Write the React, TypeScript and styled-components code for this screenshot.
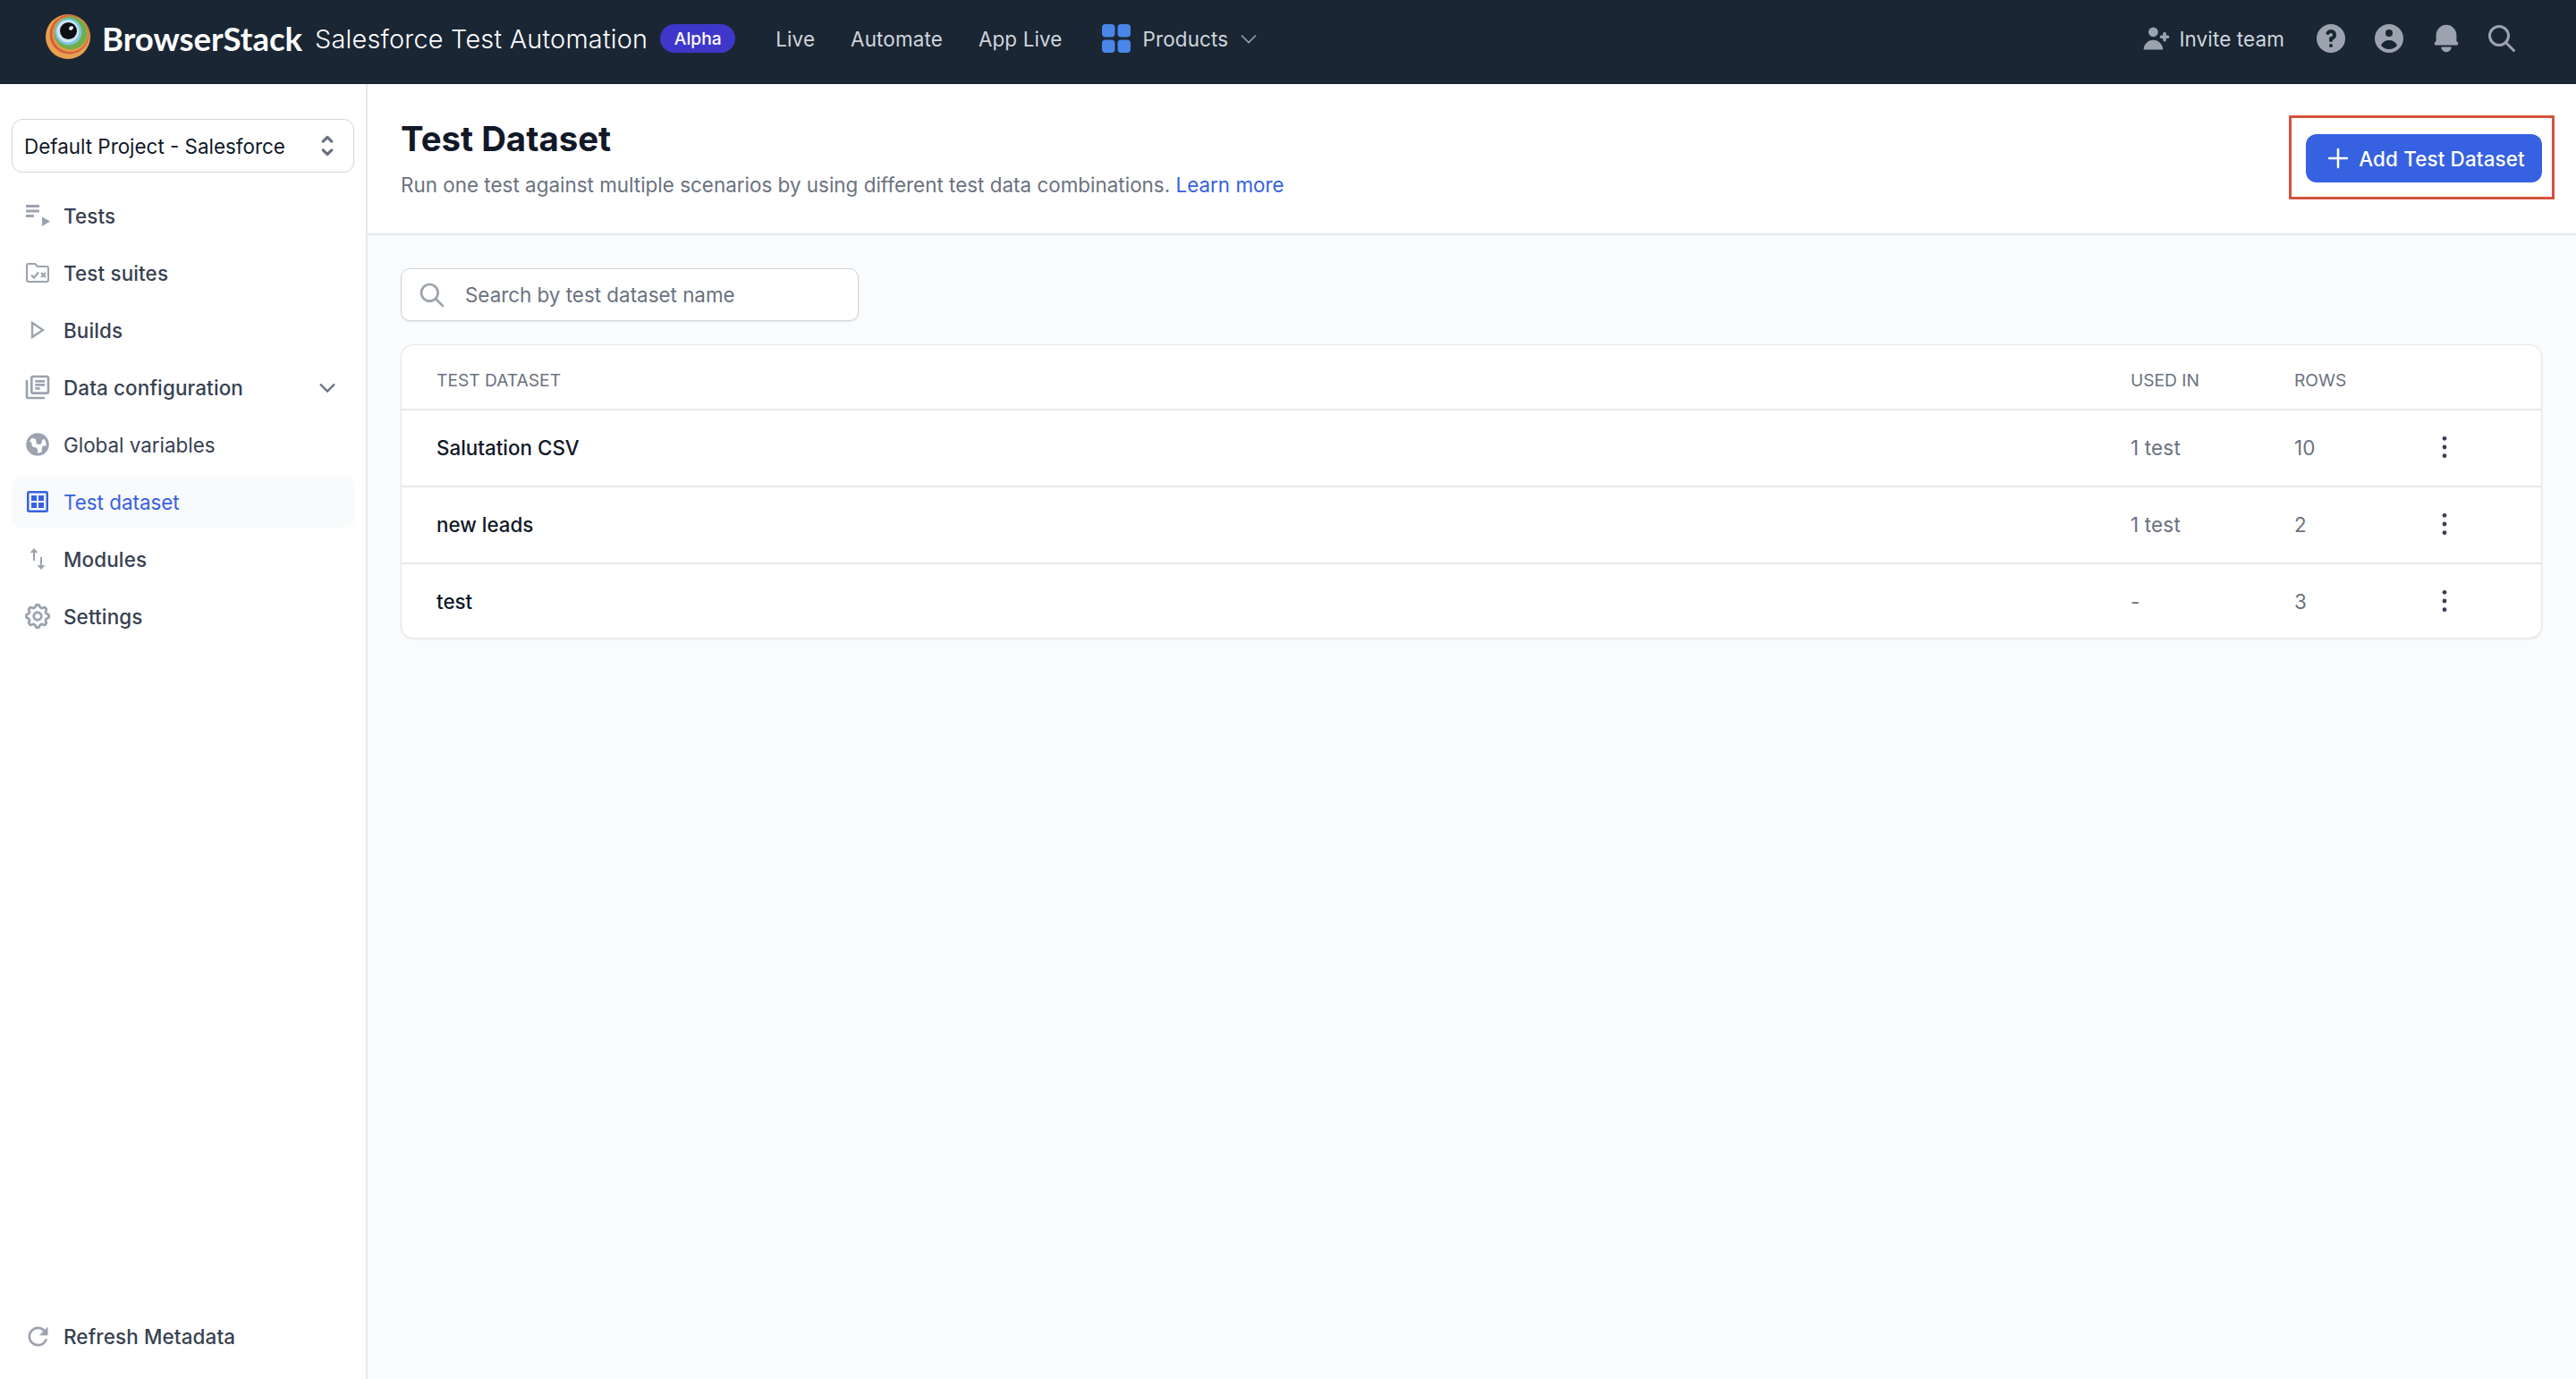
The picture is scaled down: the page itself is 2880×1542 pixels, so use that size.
import React from 'react';
import styled, { createGlobalStyle } from 'styled-components';
import { HiBell, HiGlobe, HiOutlineCog, HiOutlineSearch, HiQuestionMarkCircle, HiSelector, HiUserAdd, HiUserCircle } from 'react-icons/hi';
import { MdOutlineLibraryBooks, MdRefresh } from 'react-icons/md';
import { Plus } from 'lucide-react';

const GlobalStyle = createGlobalStyle`
  html, body { margin: 0; padding: 0; height: 100%; }
  body { font-family: Inter, "Liberation Sans", sans-serif; background: #f9fbfc; color: #111827; }
  #root { height: 100%; }
  * { box-sizing: border-box; }
`;

const Page = styled.div`
  display: flex;
  flex-direction: column;
  height: 100vh;
  overflow: hidden;
`;

// Top bar
const TopBar = styled.header`
  flex: 0 0 94px;
  height: 94px;
  background: #1a2634;
  display: flex;
  align-items: center;
  padding: 0 65px 8px 51px;
  color: #d1d5db;
`;

const BrandName = styled.span`
  margin-left: 13px;
  font-family: Lato, sans-serif;
  font-size: 36.5px;
  font-weight: 700;
  color: #fff;
`;

const ProductName = styled.span`
  margin-left: 14px;
  font-size: 28.8px;
  font-weight: 300;
  color: #fff;
  letter-spacing: 0.25px;
`;

const AlphaBadge = styled.span`
  margin-left: 14px;
  width: 84px;
  height: 32px;
  border-radius: 16px;
  background: #3f37c9;
  color: #fff;
  font-size: 19.2px;
  font-weight: 500;
  display: flex;
  align-items: center;
  justify-content: center;
`;

const TopLinks = styled.nav`
  display: flex;
  align-items: center;
  gap: 40px;
  margin-left: 45px;
`;

const TopLink = styled.a`
  font-size: 22.4px;
  letter-spacing: 0.15px;
  color: #d1d5db;
  display: flex;
  align-items: center;
`;

const ProductsLink = styled(TopLink)`
  gap: 14px;
  margin-left: 4px;
`;

const ProductsChevron = styled.span`
  display: flex;
  color: #9ca3af;
`;

const TopActions = styled.div`
  margin-left: auto;
  display: flex;
  align-items: center;
  gap: 25px;
  color: #9ca3af;
  svg { flex: none; }
`;

const InviteLink = styled(TopLink)`
  gap: 7px;
  margin-right: 7px;
  svg { color: #9ca3af; }
`;

// Body
const Body = styled.div`
  flex: 1;
  display: flex;
  min-height: 0;
`;

const Sidebar = styled.aside`
  flex: 0 0 411px;
  background: #fff;
  border-right: 2px solid #e5e7eb;
  padding: 39px 13px 19px;
  display: flex;
  flex-direction: column;
`;

const ProjectSelect = styled.div`
  height: 60px;
  border: 1px solid #d1d5db;
  border-radius: 12px;
  padding: 0 13px;
  display: flex;
  align-items: center;
  justify-content: space-between;
  font-size: 22.4px;
  color: #111827;
  svg { color: #6b7280; }
`;

const NavList = styled.nav`
  margin-top: 19px;
  display: flex;
  flex-direction: column;
  gap: 6px;
`;

const NavRow = styled.a<{ $active?: boolean; $plain?: boolean }>`
  height: 58px;
  display: flex;
  align-items: center;
  gap: 15px;
  padding: 0 16px 0 15px;
  border-radius: 10px;
  font-size: 22.4px;
  font-weight: ${({ $active, $plain }) => ($active || $plain ? 400 : 500)};
  letter-spacing: ${({ $active, $plain }) => ($active || $plain ? 0 : 0.15)}px;
  color: ${({ $active }) => ($active ? '#3661e0' : '#374151')};
  background: ${({ $active }) => ($active ? '#f9fafb' : 'transparent')};
`;

const NavIcon = styled.span<{ $active?: boolean }>`
  width: 28px;
  height: 28px;
  flex: none;
  display: flex;
  align-items: center;
  justify-content: center;
  color: ${({ $active }) => ($active ? '#3661e0' : '#9ca3af')};
  svg { flex: none; }
`;

const NavChevron = styled.span`
  margin-left: auto;
  margin-right: 5px;
  display: flex;
  color: #6b7280;
`;

const SidebarFooter = styled.div`
  margin-top: auto;
`;

// Main content
const Main = styled.main`
  flex: 1;
  min-width: 0;
  display: flex;
  flex-direction: column;
`;

const PageHeader = styled.div`
  height: 169px;
  flex: none;
  background: #fff;
  border-bottom: 2px solid #e5e7eb;
  padding: 0 38px 0 37px;
  display: flex;
  align-items: flex-start;
  justify-content: space-between;
`;

const Title = styled.h1`
  margin: 38px 0 0;
  font-size: 38.4px;
  line-height: 46px;
  font-weight: 700;
  color: #111827;
`;

const Subtitle = styled.p`
  margin: 12px 0 0;
  font-size: 22.4px;
  line-height: 34px;
  letter-spacing: 0.02px;
  color: #6b7280;
`;

const LearnMore = styled.a`
  color: #3661e0;
`;

const AddButton = styled.button`
  position: relative;
  margin-top: 56px;
  width: 264px;
  height: 54px;
  border: none;
  border-radius: 12px;
  background: #3661e0;
  color: #fff;
  font: 500 22.4px Inter, sans-serif;
  letter-spacing: 0.15px;
  display: flex;
  align-items: center;
  justify-content: center;
  gap: 6px;
`;

// Annotation drawn on the screenshot round the button
const Highlight = styled.span`
  position: absolute;
  inset: -21px -14px -19px -19px;
  border: 3px solid #d4533b;
  pointer-events: none;
`;

const Content = styled.div`
  flex: 1;
  padding: 37px 38px 0 37px;
  background: #f9fbfc;
`;

const SearchBox = styled.div`
  width: 512px;
  height: 59px;
  background: #fff;
  border: 1px solid #d1d5db;
  border-radius: 10px;
  box-shadow: 0 1px 2px rgba(0, 0, 0, 0.08);
  display: flex;
  align-items: center;
  gap: 21px;
  padding-left: 18px;
  font-size: 22.4px;
  color: #6b7280;
  svg { color: #9ca3af; flex: none; }
`;

const Card = styled.section`
  margin-top: 26px;
  background: #fff;
  border: 1px solid #e5e7eb;
  border-radius: 14px;
  box-shadow: 0 1px 3px rgba(0, 0, 0, 0.08);
`;

const TableRow = styled.div<{ $head?: boolean; $last?: boolean }>`
  display: grid;
  grid-template-columns: 1fr 183px 138px 60px;
  align-items: center;
  padding: ${({ $head }) => ($head ? '6px' : '0')} 78px ${({ $head, $last }) => ($head || $last ? 0 : 2)}px 39px;
  height: ${({ $head, $last }) => ($head ? 71 : $last ? 84 : 86)}px;
  border-top: ${({ $head }) => ($head ? 'none' : '2px solid #e5e7eb')};
  font-size: ${({ $head }) => ($head ? 19.2 : 22.4)}px;
  color: ${({ $head }) => ($head ? '#6b7280' : 'inherit')};
`;

const NameCell = styled.span`
  color: #111827;
  font-weight: 500;
`;

const HeadCell = styled.span``;

const MutedCell = styled.span`
  color: #6b7280;
  letter-spacing: 0.2px;
`;

const MenuCell = styled.span`
  display: flex;
  justify-content: center;
  color: #374151;
`;

const Logo = () => (
  <svg width="50" height="50" viewBox="0 0 50 50" style={{ flex: 'none', marginTop: -4 }}>
    <circle cx="25" cy="25" r="25" fill="#e8a050" />
    <ellipse cx="26.5" cy="22.5" rx="22" ry="22" fill="#d2603c" />
    <circle cx="27.5" cy="22" r="20" fill="#e59a45" />
    <circle cx="28" cy="21" r="18.5" fill="#6fae4c" />
    <circle cx="25.5" cy="19.5" r="15" fill="#7fc4e4" />
    <circle cx="25" cy="19" r="12.5" fill="#cde6ee" />
    <circle cx="25.5" cy="18.5" r="9.5" fill="#0d0f12" />
    <ellipse cx="28.5" cy="15.5" rx="2.6" ry="1.9" fill="#fff" transform="rotate(-30 28.5 15.5)" />
  </svg>
);

const GridLogo = () => (
  <svg width="32" height="32" viewBox="0 0 32 32">
    <rect x="0" y="0" width="14.5" height="14.5" rx="4" fill="#4a86e8" />
    <rect x="17.5" y="0" width="14.5" height="14.5" rx="4" fill="#4a86e8" />
    <rect x="0" y="17.5" width="14.5" height="14.5" rx="4" fill="#4a86e8" />
    <rect x="17.5" y="17.5" width="14.5" height="14.5" rx="4" fill="#4a86e8" />
  </svg>
);

const Chevron = ({ weight = 1.6 }: { weight?: number }) => (
  <svg width="18" height="11" viewBox="0 0 18 11" fill="none" stroke="currentColor" strokeWidth={weight}>
    <path d="M1 1.500 L9 9.500 L17 1.500" />
  </svg>
);

const TestsIcon = () => (
  <svg width="28" height="24" viewBox="0 0 28 24" fill="currentColor">
    <rect x="1" y="0" width="15" height="3" />
    <rect x="1" y="5.5" width="15" height="3" />
    <rect x="1" y="11" width="9" height="3" />
    <path d="M19 13.5 L28 18.500 L19 24 Z" />
  </svg>
);

const SuitesIcon = () => (
  <svg width="28" height="24" viewBox="0 0 28 24" fill="none" stroke="currentColor" strokeWidth="2">
    <path d="M2 5.5 V20 a2 2 0 0 0 2 2 H24 a2 2 0 0 0 2 -2 V7 a2 2 0 0 0 -2 -2 H14 L11 2 H4 a2 2 0 0 0 -2 2 Z" />
    <path d="M7 14.5 L10 17.5 L15 11.5" strokeWidth="2.2" />
    <path d="M18 12 L23 17 M23 12 L18 17" strokeWidth="2.2" />
  </svg>
);

const BuildsIcon = () => (
  <svg width="18" height="20" viewBox="0 0 18 20" fill="none" stroke="currentColor" strokeWidth="2.4">
    <path d="M3 2 L15 10 L3 18 Z" />
  </svg>
);

const DatasetIcon = () => (
  <svg width="24" height="24" viewBox="0 0 24 24" fill="currentColor">
    <path fillRule="evenodd" d="M2.5 0 H21.5 A2.5 2.5 0 0 1 24 2.500 V21.500 A2.500 2.500 0 0 1 21.500 24 H2.500 A2.500 2.500 0 0 1 0 21.500 V2.500 A2.500 2.500 0 0 1 2.500 0 Z M2.500 2.500 V21.500 H21.500 V2.500 Z" />
    <rect x="5" y="5" width="6" height="6" />
    <rect x="13" y="5" width="6" height="6" />
    <rect x="5" y="13" width="6" height="6" />
    <rect x="13" y="13" width="6" height="6" />
  </svg>
);

const ModulesIcon = () => (
  <svg width="20" height="26" viewBox="0 0 20 26" fill="currentColor">
    <path d="M6 1 L10.500 6 H7 V15 H5 V6 H1.500 Z" />
    <path d="M14 25 L9.500 20 H13 V11 H15 V20 H18.500 Z" />
  </svg>
);

const Kebab = () => (
  <svg width="6" height="26" viewBox="0 0 6 26" fill="currentColor">
    <circle cx="3" cy="3.300" r="2.400" />
    <circle cx="3" cy="13" r="2.400" />
    <circle cx="3" cy="22.700" r="2.400" />
  </svg>
);

const rows = [
  { name: 'Salutation CSV', used: '1 test', count: '10' },
  { name: 'new leads', used: '1 test', count: '2' },
  { name: 'test', used: '-', count: '3' },
];

const App: React.FC = () => {
  return (
    <Page>
      <GlobalStyle />
      <TopBar>
        <Logo />
        <BrandName>BrowserStack</BrandName>
        <ProductName>Salesforce Test Automation</ProductName>
        <AlphaBadge>Alpha</AlphaBadge>
        <TopLinks>
          <TopLink>Live</TopLink>
          <TopLink>Automate</TopLink>
          <TopLink>App Live</TopLink>
          <ProductsLink>
            <GridLogo />
            Products
            <ProductsChevron><Chevron /></ProductsChevron>
          </ProductsLink>
        </TopLinks>
        <TopActions>
          <InviteLink>
            <HiUserAdd size={36} />
            Invite team
          </InviteLink>
          <HiQuestionMarkCircle size={40} />
          <HiUserCircle size={40} />
          <HiBell size={38} />
          <HiOutlineSearch size={36} />
        </TopActions>
      </TopBar>
      <Body>
        <Sidebar>
          <ProjectSelect>
            Default Project - Salesforce
            <HiSelector size={32} />
          </ProjectSelect>
          <NavList>
            <NavRow><NavIcon><TestsIcon /></NavIcon>Tests</NavRow>
            <NavRow><NavIcon><SuitesIcon /></NavIcon>Test suites</NavRow>
            <NavRow><NavIcon><BuildsIcon /></NavIcon>Builds</NavRow>
            <NavRow>
              <NavIcon><MdOutlineLibraryBooks size={32} /></NavIcon>
              Data configuration
              <NavChevron><Chevron weight={2.4} /></NavChevron>
            </NavRow>
            <NavRow $plain><NavIcon><HiGlobe size={32} /></NavIcon>Global variables</NavRow>
            <NavRow $active><NavIcon $active><DatasetIcon /></NavIcon>Test dataset</NavRow>
            <NavRow><NavIcon><ModulesIcon /></NavIcon>Modules</NavRow>
            <NavRow><NavIcon><HiOutlineCog size={34} /></NavIcon>Settings</NavRow>
          </NavList>
          <SidebarFooter>
            <NavRow><NavIcon><MdRefresh size={33} /></NavIcon>Refresh Metadata</NavRow>
          </SidebarFooter>
        </Sidebar>
        <Main>
          <PageHeader>
            <div>
              <Title>Test Dataset</Title>
              <Subtitle>
                Run one test against multiple scenarios by using different test data combinations.{' '}
                <LearnMore>Learn more</LearnMore>
              </Subtitle>
            </div>
            <AddButton>
              <Plus size={34} strokeWidth={1.8} />
              Add Test Dataset
              <Highlight />
            </AddButton>
          </PageHeader>
          <Content>
            <SearchBox>
              <HiOutlineSearch size={32} />
              Search by test dataset name
            </SearchBox>
            <Card>
              <TableRow $head>
                <HeadCell>TEST DATASET</HeadCell>
                <HeadCell>USED IN</HeadCell>
                <HeadCell>ROWS</HeadCell>
                <span />
              </TableRow>
              {rows.map((row, i) => (
                <TableRow key={row.name} $last={i === rows.length - 1}>
                  <NameCell>{row.name}</NameCell>
                  <MutedCell>{row.used}</MutedCell>
                  <MutedCell>{row.count}</MutedCell>
                  <MenuCell><Kebab /></MenuCell>
                </TableRow>
              ))}
            </Card>
          </Content>
        </Main>
      </Body>
    </Page>
  );
};

export default App;
